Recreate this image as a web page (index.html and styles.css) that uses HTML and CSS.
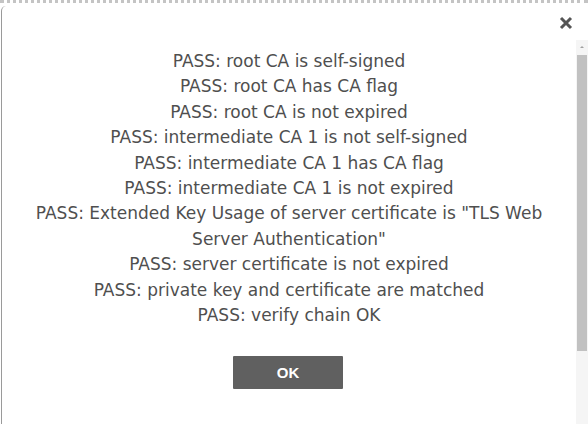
FILE: index.html
```html
<!DOCTYPE html>
<html lang="en">
<head>
  <meta charset="UTF-8">
  <title>Certificate Check</title>
  <link rel="stylesheet" href="styles.css">
</head>
<body>
  <div class="dialog">
    <div class="dialog-header">
      <button class="close-btn" aria-label="Close">
        <svg width="14" height="14" viewBox="0 0 14 14">
          <path d="M2 2 L12 12 M12 2 L2 12" stroke="#555" stroke-width="3" stroke-linecap="butt"/>
        </svg>
      </button>
    </div>

    <div class="dialog-body">
      <div class="scroll-content">
        <!-- Certificate chain check results -->
        <div class="results">
          <p>PASS: root CA is self-signed</p>
          <p>PASS: root CA has CA flag</p>
          <p>PASS: root CA is not expired</p>
          <p>PASS: intermediate CA 1 is not self-signed</p>
          <p>PASS: intermediate CA 1 has CA flag</p>
          <p>PASS: intermediate CA 1 is not expired</p>
          <p>PASS: Extended Key Usage of server certificate is "TLS Web Server Authentication"</p>
          <p>PASS: server certificate is not expired</p>
          <p>PASS: private key and certificate are matched</p>
          <p>PASS: verify chain OK</p>
        </div>
        <div class="actions">
          <button class="ok-btn">OK</button>
        </div>
      </div>

      <div class="scrollbar">
        <div class="scroll-arrow"></div>
        <div class="scroll-thumb"></div>
      </div>
    </div>
  </div>
</body>
</html>
```

FILE: styles.css
```css
html, body {
  margin: 0;
  padding: 0;
  background-color: #ffffff;
}

body {
  font-family: "DejaVu Sans", Verdana, sans-serif;
  color: #4f4f4f;
  overflow: hidden;
}

.dialog {
  height: 424px;
  border-top: 3px dotted #c4c4c4;
  display: flex;
  flex-direction: column;
  box-sizing: border-box;
}

.dialog-header {
  height: 34px;
  margin-top: 3px;
  margin-left: 1px;
  border-left: 1px solid #9a9a9a;
  border-top-left-radius: 5px;
  display: flex;
  justify-content: flex-end;
  align-items: flex-start;
  box-sizing: border-box;
}

.close-btn {
  margin: 10px 15px 0 0;
  padding: 0;
  border: none;
  background: none;
  cursor: pointer;
  line-height: 0;
}

.dialog-body {
  flex: 1;
  display: flex;
  margin-left: 1px;
  border-left: 1px solid #9a9a9a;
}

.scroll-content {
  flex: 1;
  padding-top: 9px;
}

.results {
  padding: 0 14px;
  text-align: center;
  font-size: 17px;
  line-height: 25.4px;
}

.results p {
  margin: 0;
}

.actions {
  display: flex;
  justify-content: center;
  margin-top: 28px;
  padding-right: 2px;
}

.ok-btn {
  width: 110px;
  height: 33px;
  background-color: #606060;
  color: #ffffff;
  border: none;
  border-radius: 1px;
  font-family: "Liberation Sans", Arial, sans-serif;
  font-weight: bold;
  font-size: 15px;
  cursor: pointer;
}

.scrollbar {
  width: 12px;
  background-color: #f5f5f5;
  display: flex;
  flex-direction: column;
}

.scroll-arrow {
  height: 14px;
  position: relative;
}

.scroll-arrow::after {
  content: "";
  position: absolute;
  left: 4px;
  top: 6px;
  border-left: 2px solid transparent;
  border-right: 2px solid transparent;
  border-bottom: 2px solid #a0a0a0;
}

.scroll-thumb {
  height: 296px;
  margin: 1px 1px 0 1px;
  background-color: #c1c1c1;
}
```
